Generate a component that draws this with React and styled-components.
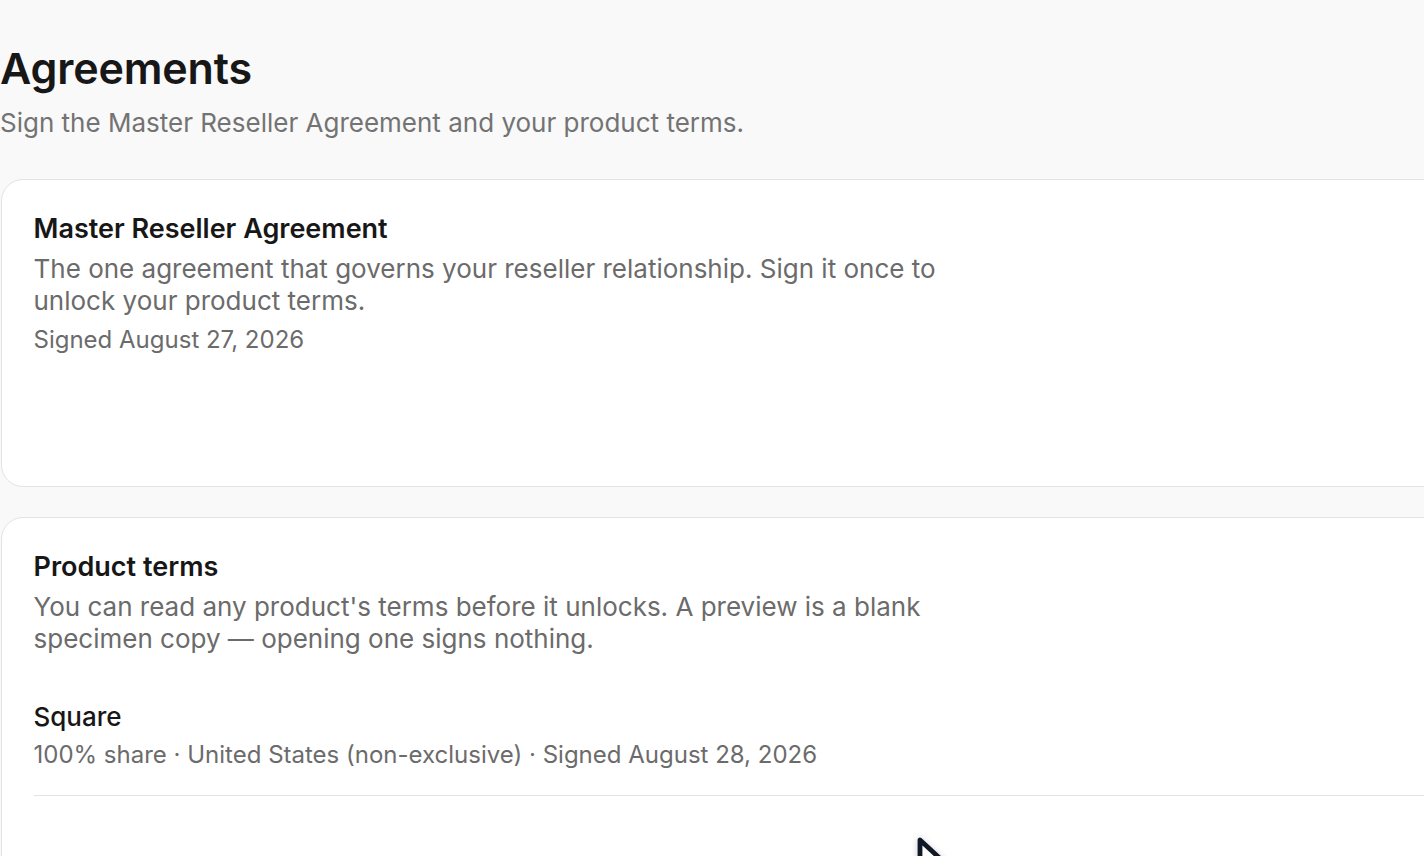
import React from 'react'
import styled, { createGlobalStyle } from 'styled-components'

const GlobalStyle = createGlobalStyle`
  html, body {
    margin: 0;
    padding: 0;
    background: #f9f9f9;
    overflow: hidden;
  }
  body {
    font-family: Inter, "Noto Sans", sans-serif;
    color: #171717;
    -webkit-font-smoothing: antialiased;
  }
`

const products = [
  {
    name: 'Square',
    meta: '100% share · United States (non-exclusive) · Signed August 28, 2026'
  }
]

const App = () => {
  return (
    <>
      <GlobalStyle />
      <Page>
        <Header>
          <Title>Agreements</Title>
          <Subtitle>Sign the Master Reseller Agreement and your product terms.</Subtitle>
        </Header>

        <Card minHeight={308}>
          <CardTitle>Master Reseller Agreement</CardTitle>
          <CardText>
            The one agreement that governs your reseller relationship. Sign it once to
            unlock your product terms.
          </CardText>
          <Meta>Signed August 27, 2026</Meta>
        </Card>

        <Card padBottom={90}>
          <CardTitle>Product terms</CardTitle>
          <CardText>
            You can read any product's terms before it unlocks. A preview is a blank
            specimen copy — opening one signs nothing.
          </CardText>
          <ProductList>
            {products.map((p) => (
              <ProductRow key={p.name}>
                <ProductName>{p.name}</ProductName>
                <RowMeta>{p.meta}</RowMeta>
              </ProductRow>
            ))}
          </ProductList>
        </Card>
      </Page>
      {/* mouse pointer caught in the screenshot */}
      <Pointer width="40" height="52" viewBox="0 0 20 26">
        <path d="M2 2 L2 21 L7 16.5 L10.5 24 L13.5 22.6 L10 15.4 L16.5 15.4 Z" fill="#fff" stroke="#111827" strokeWidth="2.4" strokeLinejoin="round" />
      </Pointer>
    </>
  )
}

export default App

const Page = styled.div`
  width: 1540px;
  padding: 42px 0 0 0;
  display: flex;
  flex-direction: column;
  gap: 30px;
`

const Header = styled.div`
  display: flex;
  flex-direction: column;
  gap: 13px;
  margin-bottom: 10px;
`

const Title = styled.h1`
  margin: 0;
  font-size: 43px;
  line-height: 52px;
  font-weight: 600;
  letter-spacing: -0.15px;
  color: #171717;
`

const Subtitle = styled.p`
  margin: 0;
  font-size: 26px;
  line-height: 32px;
  color: #737373;
`

const Card = styled.section`
  box-sizing: border-box;
  min-height: ${(p) => (p.minHeight ? `${p.minHeight}px` : 'auto')};
  margin-left: 0.5px;
  padding: 32px 32px ${(p) => p.padBottom || 31}px 32px;
  background: #fff;
  border: 1.5px solid #e3e3e3;
  border-radius: 22px;
  display: flex;
  flex-direction: column;
`

const CardTitle = styled.h2`
  margin: 0;
  font-size: 27px;
  line-height: 34px;
  font-weight: 600;
  color: #171717;
`

const CardText = styled.p`
  margin: 7px 0 0 0;
  max-width: 945px;
  font-size: 26px;
  line-height: 32px;
  color: #6b6b6b;
`

const Meta = styled.div`
  margin-top: 7.5px;
  font-size: 24px;
  line-height: 30px;
  color: #6b6b6b;
`

const RowMeta = styled(Meta)`
  margin-top: 7px;
`

const ProductList = styled.div`
  margin-top: 45.5px;
  display: flex;
  flex-direction: column;
`

const ProductRow = styled.div`
  padding-bottom: 25.5px;
  border-bottom: 1.5px solid #e3e3e3;
  display: flex;
  flex-direction: column;
`

const ProductName = styled.div`
  font-size: 26px;
  line-height: 32px;
  font-weight: 500;
  color: #171717;
`

const Pointer = styled.svg`
  position: fixed;
  left: 916px;
  top: 836px;
  filter: drop-shadow(0 1px 3px rgba(0, 0, 0, 0.2));
`
